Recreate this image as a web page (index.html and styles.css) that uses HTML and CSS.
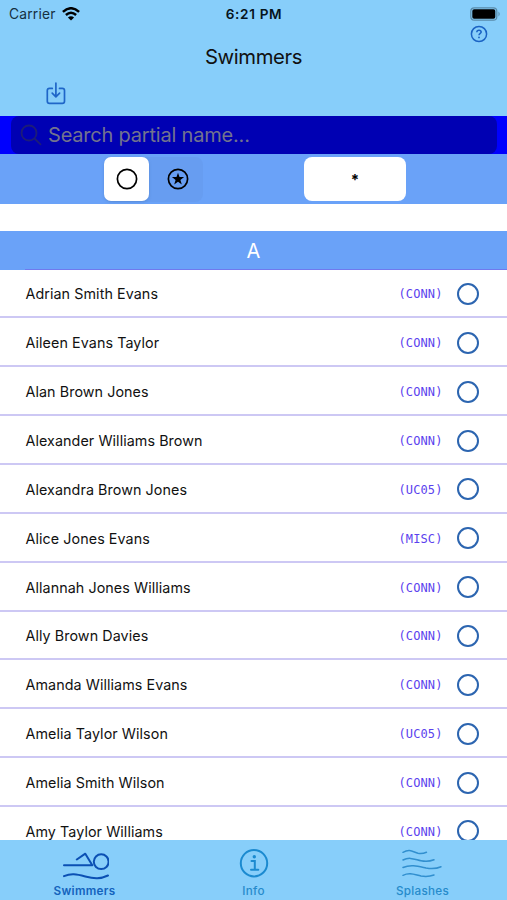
FILE: index.html
```html
<!DOCTYPE html>
<html lang="en">
<head>
<meta charset="utf-8">
<title>Swimmers</title>
<link rel="stylesheet" href="styles.css">
</head>
<body>
<div class="app">
  <header class="top">
    <div class="status">
      <div class="carrier"><span>Carrier</span>
        <svg width="18" height="14" viewBox="0 0 18 14" fill="none" stroke="#000" stroke-width="2.5"><path d="M.9 4.9Q9-2.4 17.1 4.9M3.9 8Q9 3.5 14.1 8"/><path d="M9 13.6 5.9 10.5Q9 7.9 12.1 10.5Z" fill="#000" stroke="none"/></svg>
      </div>
      <div class="clock">6:21 PM</div>
      <svg class="battery" width="31" height="14" viewBox="0 0 31 14"><rect x=".8" y=".8" width="26" height="12.4" rx="3.5" fill="none" stroke="#5a8ba9" stroke-width="1.2"/><rect x="2.3" y="2.3" width="23" height="9.4" rx="1.8"/><path d="M28.5 4.5q2.4 2.5 0 5z" fill="#5a8ba9"/></svg>
    </div>
    <div class="help"><svg width="18" height="18" viewBox="0 0 18 18" fill="none" stroke="#1a63c4" stroke-width="1.5"><circle cx="9" cy="9" r="7.6"/><path d="M6.8 7.2Q6.9 5.3 9 5.3T11.2 7.1C11.2 8.5 9 8.5 9 10.3"/><circle cx="9" cy="12.4" r=".9" fill="#1a63c4" stroke="none"/></svg></div>
    <h1>Swimmers</h1>
    <div class="tools"><svg width="20" height="23" viewBox="0 0 20 23" fill="none" stroke="#1f66c8" stroke-width="1.7" stroke-linecap="round" stroke-linejoin="round"><path d="M6.3 6.4H3.5Q1.3 6.4 1.3 8.6V19.2Q1.3 21.4 3.5 21.4H16.3Q18.5 21.4 18.5 19.2V8.6Q18.5 6.4 16.3 6.4H13.5M9.9 1V14.5M6.2 11.2 9.9 14.8 13.6 11.2"/></svg></div>
  </header>
  <div class="search"><div class="field">
    <svg width="22" height="22" viewBox="0 0 22 22" fill="none" stroke="#1c1c78" stroke-width="1.8" stroke-linecap="round"><circle cx="9" cy="9" r="7.5"/><path d="M14.5 14.5 20.5 20.3"/></svg>
    <span>Search partial name...</span>
  </div></div>
  <div class="filters">
    <div class="segments">
      <div class="segment on"><svg width="22" height="22" viewBox="0 0 22 22" fill="none" stroke="#000" stroke-width="1.7"><circle cx="11" cy="11" r="9.6"/></svg></div>
      <div class="segment"><svg width="22" height="22" viewBox="0 0 22 22" fill="none" stroke="#000" stroke-width="1.7"><circle cx="11" cy="11" r="9.6"/><path d="M11 4.7 12.5 9.1H17.1L13.4 11.9 14.8 16.4 11 13.7 7.2 16.4 8.6 11.9 4.9 9.1H9.5Z" fill="#000" stroke="none"/></svg></div>
    </div>
    <div class="team">*</div>
  </div>
  <main>
    <h2>A</h2>
    <ul>
      <li><span class="name">Adrian Smith Evans</span><span class="code">(CONN)</span><i class="ring"></i></li>
      <li><span class="name">Aileen Evans Taylor</span><span class="code">(CONN)</span><i class="ring"></i></li>
      <li><span class="name">Alan Brown Jones</span><span class="code">(CONN)</span><i class="ring"></i></li>
      <li><span class="name">Alexander Williams Brown</span><span class="code">(CONN)</span><i class="ring"></i></li>
      <li><span class="name">Alexandra Brown Jones</span><span class="code">(UC05)</span><i class="ring"></i></li>
      <li><span class="name">Alice Jones Evans</span><span class="code">(MISC)</span><i class="ring"></i></li>
      <li><span class="name">Allannah Jones Williams</span><span class="code">(CONN)</span><i class="ring"></i></li>
      <li><span class="name">Ally Brown Davies</span><span class="code">(CONN)</span><i class="ring"></i></li>
      <li><span class="name">Amanda Williams Evans</span><span class="code">(CONN)</span><i class="ring"></i></li>
      <li><span class="name">Amelia Taylor Wilson</span><span class="code">(UC05)</span><i class="ring"></i></li>
      <li><span class="name">Amelia Smith Wilson</span><span class="code">(CONN)</span><i class="ring"></i></li>
      <li><span class="name">Amy Taylor Williams</span><span class="code">(CONN)</span><i class="ring"></i></li>
    </ul>
  </main>
  <nav>
    <div class="tab active">
      <svg width="48" height="32" viewBox="0 0 48 32" fill="none" stroke="#0b50b4" stroke-width="2" stroke-linecap="round" stroke-linejoin="round"><circle cx="40.2" cy="13.7" r="7.4"/><path d="M3 17.2H31.3L24.3 5.7 15.8 11.5M3 28.2C10 25.2 15 26 24.300 28.500S39.300 31 47 27.500"/></svg>
      <span>Swimmers</span>
    </div>
    <div class="tab">
      <svg width="32" height="32" viewBox="0 0 32 32" fill="none" stroke="#1b8ad0" stroke-width="2" stroke-linecap="round"><circle cx="16" cy="15.2" r="13.2"/><path d="M13.5 13H16.8V21.5M13 21.8H20.3"/><circle cx="16.3" cy="8.8" r="1.7" fill="#1b8ad0" stroke="none"/></svg>
      <span>Info</span>
    </div>
    <div class="tab">
      <svg width="42" height="32" viewBox="0 0 42 32" fill="none" stroke="#318fcf" stroke-width="1.5" stroke-linecap="round"><path d="M1 4.300C8 .5 11 4 16 5.200Q20 6 24.500 4.200M1 12C8 8.500 13 11.500 19 12.800Q26 14.200 32 11.800M1 19.500C9 16 17 18.500 24 20Q33 21.500 39 18.700M1 27.300C8 23.800 13 26.800 19 28Q26 29.200 32 27"/></svg>
      <span>Splashes</span>
    </div>
  </nav>
</div>
</body>
</html>
```
FILE: styles.css
```css
* { box-sizing: border-box; }
body { margin: 0; font-family: Inter, "Liberation Sans", sans-serif; color: #111; background: #fff; }
svg { display: block; flex: none; }
.app { width: 507px; height: 900px; display: flex; flex-direction: column; overflow: hidden; }
.top { height: 115.5px; flex: none; background: #87cefa; }
.status { height: 26px; display: grid; grid-template-columns: 1fr auto 1fr; align-items: center; padding: 1px 6px 0 9px; }
.carrier { display: flex; align-items: center; gap: 6px; font-size: 13.8px; letter-spacing: .2px; color: #16303f; }
.clock { font-size: 13.6px; font-weight: 600; letter-spacing: .65px; color: #06141c; margin-left: -2px; }
.battery { justify-self: end; }
.help { display: flex; justify-content: flex-end; padding-right: 19px; height: 18px; margin-top: -1px; }
h1 { margin: 1px 0 0; height: 26px; line-height: 26px; font-size: 20.3px; letter-spacing: -.38px; font-weight: 400; text-align: center; }
.tools { padding: 11.5px 0 0 45.5px; }
.search { height: 38px; flex: none; background: #0000fe; padding: 0 10px 0 11px; }
.field { height: 38px; background: #0000b3; border-radius: 8px; display: flex; align-items: center; gap: 6px; padding-left: 9px; font-size: 20px; letter-spacing: -.2px; color: #73738e; }
.filters { height: 50px; flex: none; background: #6aa2f8; display: flex; padding: 3px 0 0 104px; }
.segments { display: flex; width: 99px; height: 45px; border-radius: 8px; background: #679df1; }
.segment { width: 45px; margin-right: 6px; height: 44px; display: flex; align-items: center; justify-content: center; }
.segment + .segment { margin: 0; }
.on { background: #fff; border-radius: 7px; box-shadow: 0 1px 3px #4070b060; }
.team { margin-left: 101px; width: 102px; height: 44px; border-radius: 8px; background: #fff; text-align: center; font-size: 15px; font-weight: 700; line-height: 45px; color: #000; }
main { flex: 1; min-height: 0; overflow: hidden; padding-top: 27px; }
h2 { margin: 0; height: 39px; line-height: 40px; background: linear-gradient(#7079ee, #7079ee) 25px 100% / 482px 1px no-repeat #6aa2f8; color: #fff; text-align: center; font-size: 20px; font-weight: 400; }
ul { list-style: none; margin: 0; padding: 0; }
li { height: 48.86px; display: flex; align-items: center; padding: 2px 28.5px 0 25.5px; border-bottom: 2px solid #cdc8f4; }
.name { flex: 1; font-size: 14.3px; letter-spacing: .08px; }
.code { font-family: "DejaVu Sans Mono", monospace; font-size: 12px; letter-spacing: .1px; color: #5b42ee; margin-right: 14px; padding-top: 1px; }
.ring { width: 22px; height: 22px; border: 2px solid #2c65b0; border-radius: 50%; }
nav { height: 60px; flex: none; background: #87cefa; display: grid; grid-template-columns: repeat(3, 1fr); }
.tab { display: flex; flex-direction: column; align-items: center; padding-top: 8px; gap: 3px; font-size: 11.7px; line-height: 16px; font-weight: 500; color: #268bcb; letter-spacing: .3px; }
.active { color: #1463bd; font-weight: 600; }
```
